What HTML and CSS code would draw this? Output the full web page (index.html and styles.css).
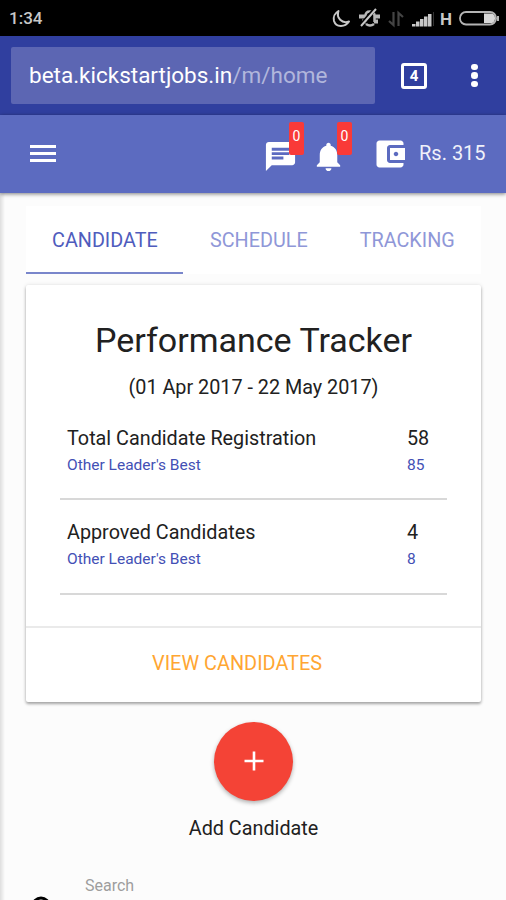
FILE: index.html
```
<!DOCTYPE html>
<html lang="en">
<head>
    <meta charset="UTF-8">
    <meta name="viewport" content="width=device-width, initial-scale=1.0">
    <title>Kickstart Jobs</title>
    <link rel="stylesheet" href="styles.css">
</head>
<body>

    <!-- Phone status bar -->
    <div class="status-bar">
        <span class="clock">1:34</span>
        <svg class="status-icons" width="176" height="22" viewBox="0 0 176 22">
            <!-- moon -->
            <path d="M8.500 3 C6 10 12 16 19 13.500 C15 19.500 6 19.500 4 13 C3 9 5 5 8.500 3Z" fill="none" stroke="#c8c8c8" stroke-width="2" stroke-linejoin="round"/>
            <!-- muted bell -->
            <path d="M29 8.500h6M45 8.500h5M32 13.500h4M44 13.500h4" fill="none" stroke="#b8b8b8" stroke-width="4"/>
            <path d="M35.500 14V8q0-4.500 4.500-4.500t4.500 4.500v6M36 16q4 3 8 0" fill="none" stroke="#b8b8b8" stroke-width="2.500"/>
            <path d="M31 17L45 1" stroke="#000" stroke-width="4"/>
            <path d="M31 18L46 1" stroke="#c8c8c8" stroke-width="2"/>
            <!-- data arrows -->
            <path d="M59 13l4.500 4V4M73 9l-4.500-4v13" fill="none" stroke="#444" stroke-width="2.200"/>
            <!-- signal -->
            <path d="M82 16h3.500v2.500h-3.500zM86 13.500h3.500v5h-3.500zM90 11h3.500v7.500h-3.500zM94 8.500h3.500v10h-3.500zM98 6h3.500v12.500h-3.500z" fill="#c8c8c8"/>
            <path d="M103.500 4v14" stroke="#333" stroke-width="1"/>
            <!-- battery -->
            <rect x="130" y="4" width="36" height="12.500" rx="6" fill="none" stroke="#b4b4b4" stroke-width="1.800"/>
            <path d="M154 5.500h8q3 1 3 4.800t-3 4.800h-8z" fill="#d8d8d8"/>
            <path d="M168 8v5" stroke="#b4b4b4" stroke-width="2"/>
        </svg>
        <span class="network">H</span>
    </div>

    <!-- Browser bar -->
    <div class="browser-bar">
        <div class="url"><span class="host">beta.kickstartjobs.in</span><span class="path">/m/home</span></div>
        <div class="tab-count">4</div>
        <div class="dots"><i></i><i></i><i></i></div>
    </div>

    <!-- App header -->
    <header class="app-bar">
        <div class="menu"><i></i><i></i><i></i></div>
        <div class="header-icon chat">
            <svg viewBox="0 0 24 24" width="35" height="35" fill="#fff"><path d="M20 2H4c-1.100 0-1.990.9-1.990 2L2 22l4-4h14c1.100 0 2-.9 2-2V4c0-1.100-.9-2-2-2zM6 9h12v2H6V9zm8 5H6v-2h8v2zm4-6H6V6h12v2z"/></svg>
            <span class="badge">0</span>
        </div>
        <div class="header-icon bell">
            <svg viewBox="0 0 24 24" width="35" height="35" fill="#fff"><path d="M12 22c1.100 0 2-.9 2-2h-4c0 1.100.89 2 2 2zm6-6v-5c0-3.070-1.640-5.640-4.500-6.320V4c0-.83-.67-1.500-1.500-1.500s-1.500.67-1.500 1.500v.68C7.630 5.360 6 7.920 6 11v5l-2 2v1h16v-1l-2-2z"/></svg>
            <span class="badge">0</span>
        </div>
        <div class="header-icon wallet">
            <svg viewBox="0 0 24 24" width="36" height="36" fill="#fff"><path d="M21 18v1c0 1.100-.9 2-2 2H5c-1.110 0-2-.9-2-2V5c0-1.100.89-2 2-2h14c1.100 0 2 .9 2 2v1h-9c-1.110 0-2 .9-2 2v8c0 1.100.89 2 2 2h9zm-9-2h10V8H12v8zm4-2.500c-.83 0-1.500-.67-1.500-1.500s.67-1.500 1.500-1.500 1.500.67 1.500 1.500-.67 1.500-1.500 1.500z"/></svg>
        </div>
        <span class="balance">Rs. 315</span>
    </header>

    <main class="content">
        <nav class="tabs">
            <a class="tab active">CANDIDATE</a>
            <a class="tab schedule">SCHEDULE</a>
            <a class="tab tracking">TRACKING</a>
        </nav>

        <section class="card">
            <h1>Performance Tracker</h1>
            <p class="period">(01 Apr 2017 - 22 May 2017)</p>
            <div class="row">
                <div class="label">
                    <div class="main">Total Candidate Registration</div>
                    <div class="sub">Other Leader's Best</div>
                </div>
                <div class="value">
                    <div class="main">58</div>
                    <div class="sub">85</div>
                </div>
            </div>
            <div class="row approved">
                <div class="label">
                    <div class="main">Approved Candidates</div>
                    <div class="sub">Other Leader's Best</div>
                </div>
                <div class="value">
                    <div class="main">4</div>
                    <div class="sub">8</div>
                </div>
            </div>
            <div class="card-action"><a>VIEW CANDIDATES</a></div>
        </section>

        <div class="add">
            <button class="fab"><svg width="20" height="20" viewBox="0 0 20 20"><path d="M10 0.500v19M0.500 10h19" stroke="#fff" stroke-width="2.600"/></svg></button>
            <div class="add-label">Add Candidate</div>
        </div>

        <div class="search">
            <svg width="26" height="26" viewBox="0 0 26 26"><circle cx="10" cy="10" r="8" fill="none" stroke="#000" stroke-width="3"/><path d="M16 16l8 8" stroke="#000" stroke-width="3"/></svg>
            <label>Search</label>
        </div>
    </main>

</body>
</html>
```
FILE: styles.css
```
/* General styling */
* {
    box-sizing: border-box;
}

body {
    margin: 0;
    height: 900px;
    overflow: hidden;
    font-family: Roboto, sans-serif;
    font-size: 20px;
    color: #212121;
    background: #fcfcfc;
}

/* Status bar */
.status-bar {
    display: flex;
    position: relative;
    height: 36px;
    padding-left: 9px;
    background: #000;
    color: #c8c8c8;
}

.clock {
    font-size: 17px;
    font-weight: 500;
    line-height: 37px;
}

.status-icons {
    position: absolute;
    left: 330px;
    top: 8px;
}

.network {
    position: absolute;
    left: 440px;
    font-size: 17px;
    font-weight: 700;
    line-height: 38px;
}

/* Browser bar */
.browser-bar {
    display: flex;
    align-items: center;
    height: 79px;
    padding-left: 11px;
    background: #303f9f;
}

.url {
    width: 364px;
    height: 57px;
    padding-left: 18px;
    border-radius: 2px;
    background: #5c66b3;
    color: #fff;
    font-size: 22.500px;
    line-height: 57px;
    white-space: nowrap;
}

.path {
    color: #b1b6dc;
}

.tab-count {
    width: 26px;
    height: 26px;
    margin-left: 26px;
    border: 3px solid #fff;
    border-radius: 3px;
    color: #fff;
    font-size: 15px;
    font-weight: 700;
    line-height: 20px;
    text-align: center;
}

.dots {
    display: flex;
    flex-direction: column;
    gap: 2px;
    margin-left: 44px;
}

.dots i {
    width: 6.500px;
    height: 6.500px;
    border-radius: 50%;
    background: #fff;
}

/* App header */
.app-bar {
    display: flex;
    position: relative;
    height: 78px;
    padding-left: 30px;
    background: #5c6bc0;
    box-shadow: 0 1px 4px rgba(0, 0, 0, 0.5);
    z-index: 1;
}

.menu {
    display: flex;
    flex-direction: column;
    gap: 4px;
    width: 26px;
    margin-top: 30px;
}

.menu i {
    height: 3px;
    background: #fff;
}

.header-icon {
    position: relative;
    height: 36px;
    margin-top: 24px;
}

.header-icon svg {
    display: block;
}

.chat {
    margin-left: 207px;
}

.bell {
    margin-left: 13px;
}

.wallet {
    margin: 21px 0 0 26px;
}

.badge {
    position: absolute;
    left: 26px;
    top: -17px;
    width: 15px;
    height: 33px;
    border-radius: 2px;
    background: #f93a38;
    color: #fff;
    font-size: 14px;
    line-height: 29px;
    text-align: center;
}

.balance {
    margin-left: 11px;
    color: #f0f1fa;
    line-height: 76px;
}

/* Page content */
.content {
    height: 707px;
    padding: 13px 25px 0 26px;
    background: linear-gradient(to right, #dedede, #f0f0f0 3px, #fcfcfc 5px);
}

.tabs {
    display: flex;
    height: 68px;
    background: #fff;
    font-size: 19.800px;
    line-height: 69px;
}

.tab {
    color: #8f97d8;
}

.tab.active {
    width: 157px;
    padding-left: 26px;
    border-bottom: 2px solid #7986cb;
    color: #4f5cbd;
}

.schedule {
    margin-left: 27px;
}

.tracking {
    margin-left: 52px;
}

/* Performance card */
.card {
    height: 417px;
    margin-top: 11px;
    padding-top: 32px;
    border-radius: 2px;
    background: #fff;
    box-shadow: 0 2px 3px rgba(0, 0, 0, 0.32), 0 0 4px rgba(0, 0, 0, 0.1);
}

h1 {
    margin: 0;
    font-size: 34px;
    font-weight: 400;
    line-height: 46px;
    text-align: center;
}

.period {
    margin: 0;
    font-size: 19.800px;
    line-height: 50px;
    text-align: center;
}

.row {
    display: flex;
    height: 87px;
    margin: 0 34px;
    padding: 13px 0 0 7px;
    border-bottom: 2px solid #d8d8d8;
}

.row.approved {
    height: 95px;
    padding-top: 20px;
}

.label {
    width: 340px;
}

.main {
    font-size: 19.800px;
    line-height: 26px;
}

.sub {
    color: #4350b5;
    font-size: 15.500px;
    line-height: 27px;
}

.card-action {
    height: 76px;
    margin-top: 31px;
    padding-left: 126px;
    border-top: 2px solid #eaeaea;
    color: #ffa632;
    font-size: 19.900px;
    line-height: 71px;
}

/* Add button */
.add {
    margin-top: 20px;
    text-align: center;
}

.fab {
    display: block;
    width: 79px;
    height: 79px;
    margin: 0 auto;
    padding: 0;
    border: none;
    border-radius: 50%;
    background: #f44336;
    box-shadow: 0 2px 4px rgba(0, 0, 0, 0.3);
}

.fab svg {
    display: block;
    margin: -1px auto 0;
}

.add-label {
    margin-top: 15px;
    font-size: 19.800px;
    line-height: 26px;
}

/* Search */
.search {
    display: flex;
    margin-top: 34px;
    padding-left: 5px;
    color: #9e9e9e;
    font-size: 16px;
    line-height: 20px;
}

.search svg {
    margin-top: 20px;
}

.search label {
    margin-left: 28px;
}
```
